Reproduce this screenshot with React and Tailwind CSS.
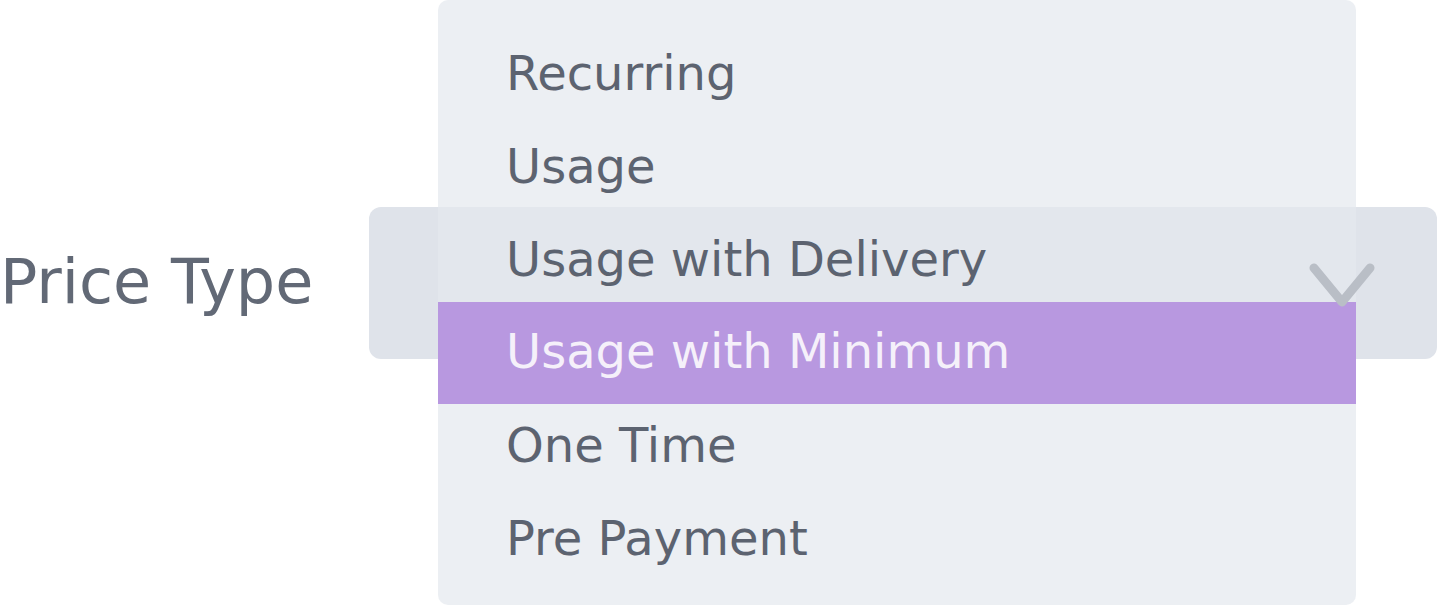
import { useState } from 'react';

const OPTIONS = [
  'Recurring',
  'Usage',
  'Usage with Delivery',
  'Usage with Minimum',
  'One Time',
  'Pre Payment',
];

function Chevron() {
  return (
    <svg width="66" height="44" viewBox="0 0 66 44" fill="none" className="relative z-20 mt-1">
      <polyline
        points="5,5 33,39 61,5"
        stroke="#b9bec6"
        strokeWidth="9"
        strokeLinecap="round"
        strokeLinejoin="round"
      />
    </svg>
  );
}

export default function App() {
  const [active, setActive] = useState('Usage with Minimum');

  return (
    <div
      className="relative h-[606px] w-[1437px] overflow-hidden bg-white"
      style={{ fontFamily: '"DejaVu Sans", sans-serif' }}
    >
      <div className="flex items-start pt-[207px]">
        <div className="flex h-[152px] w-[369px] shrink-0 items-center">
          <label className="whitespace-nowrap pb-[2px] text-[62px] leading-none text-[#626976]">
            Price Type
          </label>
        </div>

        {/* select trigger, menu opens over it */}
        <div className="relative flex h-[152px] flex-1 items-center justify-end rounded-[12px] bg-[#dfe3ea] pr-[62px]">
          <Chevron />

          <ul className="absolute left-[69px] top-[-207px] z-10 flex h-[605px] w-[918px] flex-col rounded-[10px] bg-[#e4e8ee]/70 pt-[26px]">
            {OPTIONS.map(opt =>
              opt === active ? (
                <li
                  key={opt}
                  onClick={() => setActive(opt)}
                  className="-mb-[6px] -mt-[3px] flex h-[102px] shrink-0 cursor-pointer items-center bg-[#b898e0] pb-[4px] pl-[68px] text-[48px] leading-none text-[#f5f0fa]"
                >
                  {opt}
                </li>
              ) : (
                <li
                  key={opt}
                  onClick={() => setActive(opt)}
                  className="flex h-[93px] shrink-0 cursor-pointer items-center pl-[68px] text-[48px] leading-none text-[#5c6370]"
                >
                  {opt}
                </li>
              )
            )}
          </ul>
        </div>
      </div>
    </div>
  );
}
